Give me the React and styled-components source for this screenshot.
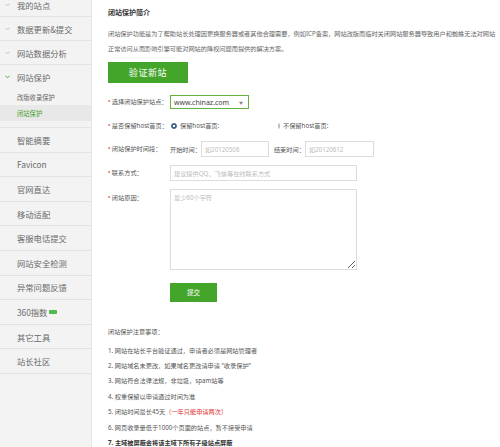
import React from "react";
import styled, { createGlobalStyle } from "styled-components";

const Global = createGlobalStyle`
  html, body {
    margin: 0;
    padding: 0;
    background: #fff;
    overflow: hidden;
  }
  body {
    font-family: "Noto Sans", "Noto Sans CJK SC", sans-serif;
  }
`;

const Page = styled.div`
  display: flex;
  width: 500px;
  height: 447px;
  overflow: hidden;
`;

const Side = styled.ul`
  list-style: none;
  margin: 0;
  padding: 0;
  width: 91px;
  flex-shrink: 0;
  background: #f3f3f3;
  border-right: 1px solid #e6e6e6;
  overflow: hidden;
  font-family: "Noto Sans CJK SC", sans-serif;
  li:first-child {
    margin-top: -7px;
  }
`;

const Item = styled.li`
  position: relative;
  display: flex;
  align-items: center;
  height: ${(p) => p.h || 24}px;
  padding-left: 17px;
  border-bottom: 1px solid #e3e3e3;
  font-size: 8.3px;
  color: #6a6a6a;
  box-sizing: border-box;
  white-space: nowrap;
`;

const Chevron = styled.svg`
  position: absolute;
  left: 5px;
  top: 50%;
  margin-top: -2px;
`;

const Group = styled.li`
  border-bottom: 1px solid #e3e3e3;
  padding-bottom: 6px;
  .head {
    position: relative;
    display: flex;
    align-items: center;
    height: 24px;
    padding-left: 17px;
    font-size: 8.3px;
    color: #6a6a6a;
  }
`;

const Sub = styled.div`
  display: flex;
  align-items: center;
  height: 16px;
  padding-left: 17px;
  font-size: 6.3px;
  color: ${(p) => (p.active ? "#3f9f25" : "#666")};
  background: ${(p) => (p.active ? "#e8e8e8" : "transparent")};
`;

const Badge = styled.span`
  display: inline-block;
  width: 8px;
  height: 3.5px;
  margin-left: 2px;
  background: #52b84c;
  border-radius: 1px;
`;

const Main = styled.div`
  padding: 8px 0 0 16px;
  width: 700px;
  flex-shrink: 0;
  color: #666;
  font-size: 6.2px;
`;

const Title = styled.h2`
  margin: 0;
  font-size: 7px;
  line-height: 10px;
  font-weight: bold;
  color: #333;
`;

const Intro = styled.p`
  margin: 7.5px 0 0;
  line-height: 15px;
  white-space: nowrap;
`;

const BigButton = styled.button`
  display: block;
  margin-top: 6.5px;
  width: 80px;
  height: 21px;
  border: 0;
  background: #43a52a;
  color: #fff;
  font-family: inherit;
  font-size: 9px;
  letter-spacing: 0.6px;
  padding: 0;
`;

const Form = styled.div`
  margin-top: 11px;
  display: flex;
  flex-direction: column;
  gap: 7.7px;
`;

const Row = styled.div`
  display: flex;
  align-items: ${(p) => (p.top ? "flex-start" : "center")};
  min-height: 16px;
`;

const Label = styled.span`
  width: 62px;
  flex-shrink: 0;
  white-space: nowrap;
  color: #555;
  line-height: 16px;
  padding-top: ${(p) => (p.top ? "1px" : "0")};
  b {
    color: #e23a3a;
    font-weight: normal;
    margin-right: 1.5px;
  }
`;

const Select = styled.div`
  position: relative;
  width: 79px;
  height: 14px;
  box-sizing: border-box;
  border: 1px solid #66b23e;
  display: flex;
  align-items: center;
  padding-left: 3px;
  font-size: 7px;
  color: #444;
  span {
    position: absolute;
    right: 5px;
    top: 3.5px;
    font-size: 4px;
    color: #888;
  }
`;

const RadioOpt = styled.span`
  display: inline-flex;
  align-items: center;
  width: ${(p) => p.w || 0}px;
  color: #555;
  white-space: nowrap;
`;

const Dot = styled.span`
  display: inline-block;
  width: 6px;
  height: 6px;
  box-sizing: border-box;
  border-radius: 50%;
  margin-left: 1px;
  margin-right: 3px;
  border: 1px solid ${(p) => (p.on ? "#3b5d86" : "#bbb")};
  background: ${(p) => (p.on ? "radial-gradient(circle, #fff 0 1px, #3b5d86 1.2px)" : "#f6f6f6")};
`;

const Text = styled.span`
  color: #555;
  white-space: nowrap;
  margin-left: ${(p) => p.ml || 0}px;
`;

const Input = styled.input`
  width: ${(p) => p.w}px;
  height: 16px;
  box-sizing: border-box;
  border: 1px solid #dcdcdc;
  padding: 0 3px;
  font-family: inherit;
  font-size: 6.2px;
  outline: none;
  &::placeholder {
    color: #bbb;
  }
`;

const Area = styled.textarea`
  width: 187px;
  height: 81px;
  box-sizing: border-box;
  border: 1px solid #dcdcdc;
  padding: 3px;
  font-family: inherit;
  font-size: 6.2px;
  outline: none;
  &::placeholder {
    color: #bbb;
  }
`;

const Submit = styled.button`
  display: block;
  margin: 13px 0 0 62px;
  width: 47px;
  height: 19px;
  border: 0;
  background: #43a52a;
  color: #fff;
  font-family: inherit;
  font-size: 6.5px;
  padding: 0;
`;

const Notes = styled.div`
  margin-top: 22.5px;
  color: #555;
  line-height: 15.4px;
  white-space: nowrap;
  h4 {
    margin: 0 0 3px;
    font-size: 6.2px;
    font-weight: normal;
  }
  p {
    margin: 0;
  }
  em {
    font-style: normal;
    color: #e03030;
  }
  strong {
    color: #333;
  }
`;

const Chev = ({ color }) => (
  <Chevron width="5" height="4" viewBox="0 0 5 4">
    <polyline points="0.5,0.8 2.5,2.8 4.5,0.8" fill="none" stroke={color} strokeWidth="0.9" />
  </Chevron>
);

const lower = ["智能摘要", "Favicon", "官网直达", "移动适配", "客服电话提交", "网站安全检测", "异常问题反馈", "360指数", "其它工具", "站长社区"];

export default function App() {
  return (
    <Page>
      <Global />
      <Side>
        {["我的站点", "数据更新&提交", "网站数据分析"].map((t) => (
          <Item key={t}>
            <Chev color="#bbb" />
            {t}
          </Item>
        ))}
        <Group>
          <div className="head">
            <Chev color="#3f9f25" />
            网站保护
          </div>
          <Sub>改版收录保护</Sub>
          <Sub active>闭站保护</Sub>
        </Group>
        {lower.map((t) => (
          <Item key={t} h={24.6}>
            {t}
            {t === "360指数" && <Badge />}
          </Item>
        ))}
      </Side>
      <Main>
        <Title>闭站保护简介</Title>
        <Intro>
          闭站保护功能是为了帮助站长处理因更换服务器或者其他合理需要，例如ICP备案，网站改版而临时关闭网站服务器导致用户和蜘蛛无法对网站
          <br />
          正常访问从而影响引擎可能对网站的降权问题而提供的解决方案。
        </Intro>
        <BigButton>验证新站</BigButton>
        <Form>
          <Row>
            <Label><b>•</b>选择闭站保护站点：</Label>
            <Select>
              www.chinaz.com<span>▼</span>
            </Select>
          </Row>
          <Row>
            <Label><b>•</b>是否保留host首页：</Label>
            <RadioOpt w={107}><Dot on />保留host首页:</RadioOpt>
            <RadioOpt><Dot />不保留host首页:</RadioOpt>
          </Row>
          <Row>
            <Label><b>•</b>闭站保护时间段：</Label>
            <Text>开始时间：</Text>
            <Input w={68} placeholder="如20120506" />
            <Text ml={5}>结束时间：</Text>
            <Input w={69} placeholder="如20120612" />
          </Row>
          <Row>
            <Label><b>•</b>联系方式：</Label>
            <Input w={187} placeholder="建议提供QQ、飞信等在线联系方式" />
          </Row>
          <Row top>
            <Label top><b>•</b>闭站原因：</Label>
            <Area placeholder="最少60个字符" />
          </Row>
        </Form>
        <Submit>提交</Submit>
        <Notes>
          <h4>闭站保护注意事项：</h4>
          <p>1. 网站在站长平台验证通过，申请者必须是网站管理者</p>
          <p>2. 网站域名未更改，如果域名更改请申请 “收录保护”</p>
          <p>3. 网站符合法律法规，非垃圾，spam站等</p>
          <p>4. 权重保留以申请通过时间为准</p>
          <p>5. 闭站时间最长45天<em>（一年只能申请两次）</em></p>
          <p>6. 网页收录量低于1000个页面的站点，暂不接受申请</p>
          <p><strong>7. 主域被屏蔽会将该主域下所有子级站点屏蔽</strong></p>
        </Notes>
      </Main>
    </Page>
  );
}
